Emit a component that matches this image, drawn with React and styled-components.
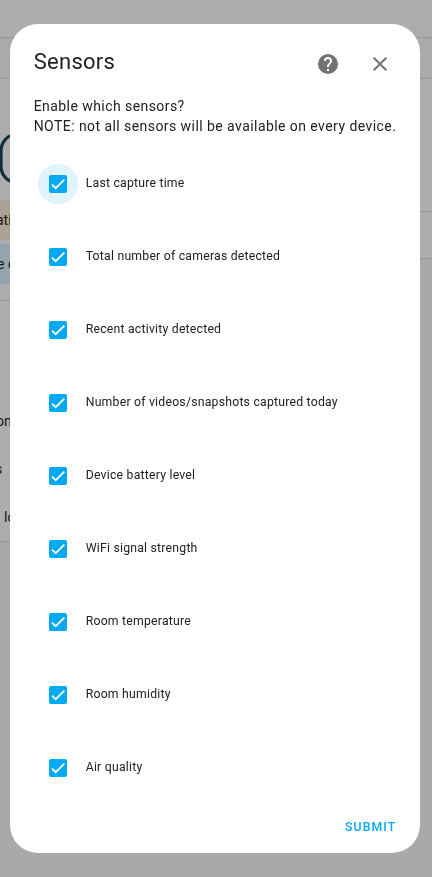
import React, { useState } from "react";
import styled, { createGlobalStyle } from "styled-components";

const GlobalStyle = createGlobalStyle`
  * { box-sizing: border-box; }
  body {
    margin: 0;
    background: #a9a9a9;
    color: #212121;
    font-family: Roboto, "Noto Sans", sans-serif;
    overflow: hidden;
  }
`;

const Screen = styled.div`
  position: relative;
  width: 100%;
  height: 100vh;
  overflow: hidden;
`;

const Page = styled.div`
  display: flex;
  flex-direction: column;
  height: 100%;
`;

const TopBar = styled.div`
  height: 38px;
  border-bottom: 1px solid #959595;
  background: #acacac;
`;

const TabBar = styled.div`
  height: 41px;
  border-bottom: 1px solid #959595;
  background: #aaaaaa;
`;

const Columns = styled.div`
  flex: 1;
  display: flex;
  justify-content: space-between;
`;

const Integration = styled.div`
  width: 200px;
  height: 463px;
  border-bottom: 1px solid #959595;
  background: #adadad;
`;

const Summary = styled.div`
  height: 222px;
  padding-top: 55px;
  border-bottom: 1px solid #959595;
`;

const Logo = styled.svg`
  display: block;
  width: 50px;
  height: 50px;
  margin-bottom: 16px;
`;

const Notice = styled.div`
  height: 40px;
  margin-bottom: 4px;
  background: ${(p) => p.$color};
  color: #161616;
  font-size: 14px;
  line-height: 40px;
  text-indent: ${(p) => p.$indent}px;
  white-space: nowrap;
`;

const LinkRow = styled.div`
  height: 48px;
  color: #161616;
  font-size: 14px;
  line-height: 48px;
  text-indent: ${(p) => p.$indent}px;
`;

const Links = styled.div`
  padding-top: 96px;
`;

const Entries = styled.div`
  width: 200px;
  height: 180px;
  border-bottom: 1px solid #959595;
  background: #adadad;
`;

const EntriesHeader = styled.div`
  height: 133px;
  border-bottom: 1px solid #959595;
`;

const Overlay = styled.div`
  position: absolute;
  inset: 0;
  padding: 24px 12px 24px 10px;
  will-change: transform;
`;

const Dialog = styled.section`
  display: flex;
  flex-direction: column;
  height: 829px;
  border-radius: 28px;
  background: #fff;
`;

const Header = styled.header`
  display: flex;
  align-items: center;
  height: 72px;
  padding: 8px 16px 0 23.7px;
`;

const Title = styled.h2`
  flex: 1;
  margin: 0 0 5px;
  font-size: 22px;
  font-weight: 400;
  line-height: 28px;
  letter-spacing: 0.275px;
`;

const IconButton = styled.button`
  display: grid;
  place-items: center;
  width: 48px;
  height: 48px;
  margin-left: ${(p) => p.$gap || 0}px;
  padding: 0;
  border: 0;
  background: none;
  color: #727272;

  svg {
    width: 24px;
    height: 24px;
    fill: currentColor;
  }
`;

const Description = styled.p`
  margin: 0 0 28px;
  padding-left: 23.7px;
  font-size: 14px;
  line-height: 20px;
  letter-spacing: 0.4375px;
  white-space: nowrap;
`;

const Options = styled.div`
  display: flex;
  flex-direction: column;
  gap: 33px;
  padding-left: 28px;
`;

const Option = styled.label`
  display: flex;
  align-items: center;
  height: 40px;
`;

const HiddenInput = styled.input`
  width: 0;
  height: 0;
  margin: 0;
  appearance: none;
  outline: none;
`;

const Halo = styled.span`
  display: grid;
  place-items: center;
  width: 40px;
  height: 40px;
  margin-right: 7.7px;
  border-radius: 50%;
  background: ${(p) => (p.$focused ? "#dff4fe" : "transparent")};
`;

const Box = styled.span`
  display: grid;
  place-items: center;
  width: 18px;
  height: 18px;
  border: 2px solid ${(p) => (p.$checked ? "#03a9f4" : "#727272")};
  border-radius: 2px;
  background: ${(p) => (p.$checked ? "#03a9f4" : "#fff")};

  svg {
    width: 14px;
    height: 14px;
    visibility: ${(p) => (p.$checked ? "visible" : "hidden")};
  }
`;

const OptionText = styled.span`
  margin-bottom: 2px;
  font-size: 12.25px;
  line-height: 18px;
  letter-spacing: 0.21875px;
  white-space: nowrap;
`;

const Footer = styled.footer`
  display: flex;
  justify-content: flex-end;
  margin-top: auto;
  padding: 0 15.7px 8px;
`;

const SubmitButton = styled.button`
  height: 36px;
  padding: 0 8px;
  border: 0;
  background: none;
  color: #03a9f4;
  font: 500 12.25px/36px Roboto, sans-serif;
  letter-spacing: 1.09375px;
`;

const SENSORS = [
  "Last capture time",
  "Total number of cameras detected",
  "Recent activity detected",
  "Number of videos/snapshots captured today",
  "Device battery level",
  "WiFi signal strength",
  "Room temperature",
  "Room humidity",
  "Air quality",
];

function SensorOption({ label, focused }) {
  const [checked, setChecked] = useState(true);
  return (
    <Option>
      <HiddenInput type="checkbox" checked={checked} onChange={() => setChecked(!checked)} />
      <Halo $focused={focused}>
        <Box $checked={checked}>
          <svg viewBox="0 0 24 24">
            <path d="M1.73 12.91 8.1 19.28 22.79 4.59" fill="none" stroke="#fff" strokeWidth="3.12" />
          </svg>
        </Box>
      </Halo>
      <OptionText>{label}</OptionText>
    </Option>
  );
}

export default function App() {
  return (
    <Screen>
      <GlobalStyle />
      <Page aria-hidden="true">
        <TopBar />
        <TabBar />
        <Columns>
          <Integration>
            <Summary>
              <Logo viewBox="0 0 50 50">
                <rect x="1" y="1" width="36" height="47" rx="14" ry="16" fill="none" stroke="#102f38" strokeWidth="3.2" />
              </Logo>
              <Notice $color="#aca292" $indent={-4}>ation</Notice>
              <Notice $color="#92a5ac" $indent={-3}>e cloud</Notice>
            </Summary>
            <Links>
              <LinkRow $indent={-4}>on</LinkRow>
              <LinkRow $indent={-5}>s</LinkRow>
              <LinkRow $indent={4}>logging</LinkRow>
            </Links>
          </Integration>
          <Entries>
            <EntriesHeader />
          </Entries>
        </Columns>
      </Page>
      <Overlay>
        <Dialog role="dialog" aria-label="Sensors">
          <Header>
            <Title>Sensors</Title>
            <IconButton aria-label="Help">
              <svg viewBox="0 0 24 24">
                <path d="M15.07 11.25 14.17 12.17C13.45 12.89 13 13.5 13 15H11V14.5C11 13.39 11.45 12.39 12.17 11.67L13.41 10.41C13.78 10.05 14 9.55 14 9A2 2 0 0 0 10 9H8A4 4 0 0 1 16 9C16 9.88 15.64 10.67 15.07 11.25M13 19H11V17H13M12 2A10 10 0 1 0 12 22 10 10 0 0 0 12 2Z" />
              </svg>
            </IconButton>
            <IconButton aria-label="Close" $gap={4}>
              <svg viewBox="0 0 24 24">
                <path d="M19 6.41 17.59 5 12 10.59 6.41 5 5 6.41 10.59 12 5 17.59 6.41 19 12 13.41 17.59 19 19 17.59 13.41 12Z" />
              </svg>
            </IconButton>
          </Header>
          <Description>
            Enable which sensors?
            <br />
            NOTE: not all sensors will be available on every device.
          </Description>
          <Options>
            {SENSORS.map((label, i) => (
              <SensorOption key={label} label={label} focused={i === 0} />
            ))}
          </Options>
          <Footer>
            <SubmitButton>SUBMIT</SubmitButton>
          </Footer>
        </Dialog>
      </Overlay>
    </Screen>
  );
}
